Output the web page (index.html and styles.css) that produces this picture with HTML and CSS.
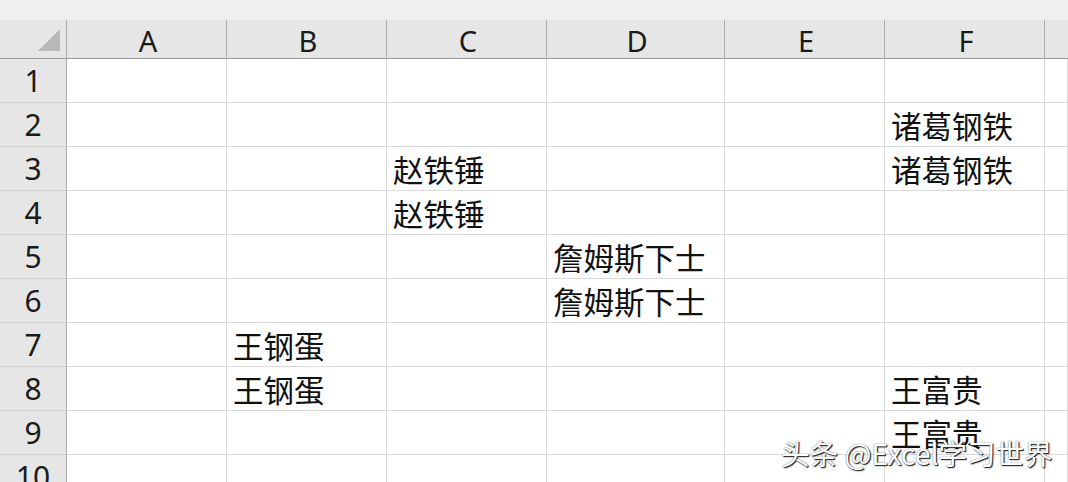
FILE: index.html
```html
<!DOCTYPE html>
<html lang="zh-CN">
<head>
<meta charset="utf-8">
<title>Sheet</title>
<link rel="stylesheet" href="styles.css">
</head>
<body>
<div class="sheet">
  <div class="strip"></div>
  <div class="grid">
    <div class="corner"><svg class="tri" width="22" height="22" viewBox="0 0 22 22"><polygon points="22,0 22,22 0,22" fill="#b8b8b8"/></svg></div>
    <div class="col">A</div><div class="col">B</div><div class="col">C</div><div class="col">D</div><div class="col">E</div><div class="col">F</div><div class="col last"></div>

    <div class="num">1</div><div class="c"></div><div class="c"></div><div class="c"></div><div class="c"></div><div class="c"></div><div class="c"></div><div class="c"></div>
    <div class="num">2</div><div class="c"></div><div class="c"></div><div class="c"></div><div class="c"></div><div class="c"></div><div class="c">诸葛钢铁</div><div class="c"></div>
    <div class="num">3</div><div class="c"></div><div class="c"></div><div class="c">赵铁锤</div><div class="c"></div><div class="c"></div><div class="c">诸葛钢铁</div><div class="c"></div>
    <div class="num">4</div><div class="c"></div><div class="c"></div><div class="c">赵铁锤</div><div class="c"></div><div class="c"></div><div class="c"></div><div class="c"></div>
    <div class="num">5</div><div class="c"></div><div class="c"></div><div class="c"></div><div class="c">詹姆斯下士</div><div class="c"></div><div class="c"></div><div class="c"></div>
    <div class="num">6</div><div class="c"></div><div class="c"></div><div class="c"></div><div class="c">詹姆斯下士</div><div class="c"></div><div class="c"></div><div class="c"></div>
    <div class="num">7</div><div class="c"></div><div class="c">王钢蛋</div><div class="c"></div><div class="c"></div><div class="c"></div><div class="c"></div><div class="c"></div>
    <div class="num">8</div><div class="c"></div><div class="c">王钢蛋</div><div class="c"></div><div class="c"></div><div class="c"></div><div class="c">王富贵</div><div class="c"></div>
    <div class="num">9</div><div class="c"></div><div class="c"></div><div class="c"></div><div class="c"></div><div class="c"></div><div class="c">王富贵</div><div class="c"></div>
    <div class="num">10</div><div class="c"></div><div class="c"></div><div class="c"></div><div class="c"></div><div class="c"></div><div class="c"></div><div class="c"></div>
  </div>
  <div class="mark">头条 @Excel学习世界</div>
</div>
</body>
</html>
```

FILE: styles.css
```css
html, body {
  margin: 0;
  padding: 0;
  background: #ffffff;
}
.sheet {
  position: relative;
  width: 1068px;
  height: 482px;
  overflow: hidden;
  background: #ffffff;
}
.strip {
  height: 20px;
  background: #efefef;
}
.grid {
  display: grid;
  grid-template-columns: 67px 160px 160px 160px 178px 160px 160px 1fr;
  grid-template-rows: 39px repeat(10, 44px);
}
.corner, .col {
  background: #e6e6e6;
  border-right: 1px solid #ababab;
  border-bottom: 1px solid #9a9a9a;
  box-sizing: border-box;
}
.corner {
  display: flex;
  align-items: flex-end;
  justify-content: flex-end;
  padding: 0 6px 7px 0;
}
.col {
  display: flex;
  align-items: center;
  justify-content: center;
  font-family: "Noto Sans", "Liberation Sans", sans-serif;
  font-size: 29px;
  color: #1a1a1a;
  padding: 2px 0 0 3px;
}
.col.last {
  border-right: none;
}
.num {
  background: #e6e6e6;
  border-right: 1px solid #ababab;
  border-bottom: 1px solid #d2d2d2;
  box-sizing: border-box;
  display: flex;
  align-items: center;
  justify-content: center;
  font-family: "Noto Sans", "Liberation Sans", sans-serif;
  font-size: 30px;
  color: #1a1a1a;
}
.c {
  border-right: 1px solid #dadada;
  border-bottom: 1px solid #dadada;
  box-sizing: border-box;
  display: flex;
  align-items: flex-end;
  padding: 0 0 3px 6px;
  font-family: "Noto Sans CJK SC", "Noto Sans", sans-serif;
  font-size: 30.5px;
  line-height: 36px;
  color: #111111;
  white-space: nowrap;
}
.mark {
  position: absolute;
  left: 781px;
  top: 435px;
  font-family: "Noto Sans CJK SC", "Noto Sans", sans-serif;
  font-size: 28.5px;
  line-height: 36px;
  color: #ffffff;
  white-space: nowrap;
  text-shadow: 1px 1px 0 #333, 0 0 1px #555, 1px 1px 2px rgba(0,0,0,0.6);
}
```
